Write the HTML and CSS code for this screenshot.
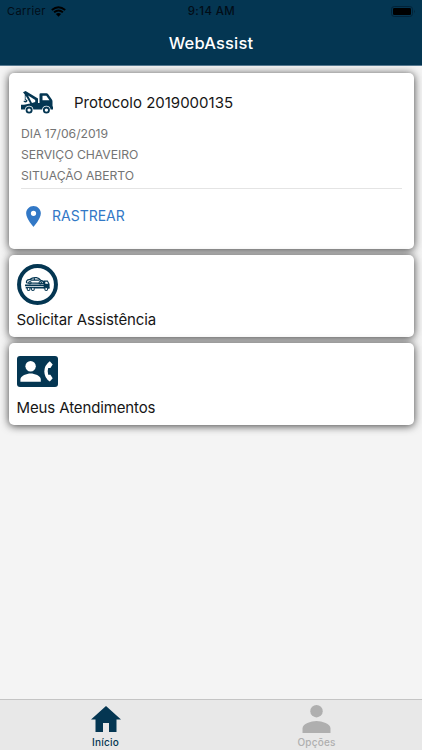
FILE: index.html
```
<!DOCTYPE html>
<html lang="pt-BR">
<head>
<meta charset="utf-8">
<title>WebAssist</title>
<link rel="stylesheet" href="styles.css">
</head>
<body>
<div class="app">
  <header class="header">
    <div class="status">
      <div class="carrier"><span>Carrier</span>
        <svg class="wifi" viewBox="0 0 15 11"><path d="M.8 4Q7.5-1.7 14.2 4M3.1 6.3Q7.5 2.5 11.9 6.3" fill="none" stroke="currentColor" stroke-width="1.9"/><path d="M4.9 8Q7.5 5.9 10.1 8L7.5 10.7Z" fill="currentColor"/></svg>
      </div>
      <div class="clock">9:14 AM</div>
      <svg class="battery" viewBox="0 0 25 11"><rect x=".5" y=".5" width="21" height="10" rx="2.8" fill="none" stroke="#022339"/><rect x="2" y="2" width="18" height="7" rx="1.3"/><path d="M23 3.7q1.6 1.8 0 3.6z" fill="#022339"/></svg>
    </div>
    <h1 class="title">WebAssist</h1>
  </header>
  <main class="content">
    <section class="card protocol">
      <div class="protocol-head">
        <svg class="truck" viewBox="0 0 32 23"><path fill="currentColor" fill-rule="evenodd" d="M2 1.2L4.6 0 17 7.6V12H18.5V3.5Q18.5 2.2 19.8 2.2H25.5Q26.4 2.2 27 3L30.7 8.2Q31.5 9.2 31.5 10.5V15.5H32V18.5H29.6A4.3 4.3 0 0 0 21.1 18.5H12.4A4.3 4.3 0 0 0 3.9 18.5H0V13.8H3L9.2 12.4 4.6 4.4V8.2Q7.2 8.9 6.2 10.6 4.7 12.3 2.5 10.6L3 9.5Q5 10.5 5 9.6L3.8 9V3.5ZM7.1 4.6L11 11.9 14.2 11V9.1ZM21.5 4.8V9.3H28.5L25.3 4.8Z"/><g fill="none" stroke="currentColor" stroke-width="1.8"><circle cx="8.1" cy="19.1" r="2.6"/><circle cx="25.4" cy="19.1" r="2.6"/></g></svg>
        <h2 class="protocol-title">Protocolo 2019000135</h2>
      </div>
      <p class="detail">DIA 17/06/2019</p>
      <p class="detail">SERVIÇO CHAVEIRO</p>
      <p class="detail">SITUAÇÃO ABERTO</p>
      <div class="track">
        <svg class="pin" viewBox="5 2 14 20"><path fill="currentColor" d="M12 2C8.13 2 5 5.13 5 9c0 5.25 7 13 7 13s7-7.75 7-13c0-3.87-3.13-7-7-7zm0 9.5a2.5 2.5 0 1 1 0-5 2.5 2.5 0 0 1 0 5z"/></svg>
        <span class="track-label">RASTREAR</span>
      </div>
    </section>
    <section class="card action">
      <svg class="assist" viewBox="0 0 40 40"><circle cx="20" cy="20" r="18" fill="none" stroke="currentColor" stroke-width="3.9"/><g fill="none" stroke="currentColor"><path stroke-width="1.2" d="M9.3 18.5Q8.7 15.5 12 15.3Q15.5 12.7 19 13.3Q21.5 13.8 23.2 16Q26.5 16.7 26.4 19L9.3 18.5M13 15.7H22M17 13.5V16"/><circle cx="12.6" cy="18.3" r="1.2"/><circle cx="22.7" cy="18.3" r="1.2"/><path stroke-width="1.6" d="M7.8 20.8H26.8M8.5 23.2H31.5"/></g><path fill="currentColor" fill-rule="evenodd" d="M26 16.2H30L31.8 19.5V24H26ZM27.6 17.4V19.2H30.5L29.5 17.4Z"/><g fill="#fff" stroke="currentColor" stroke-width="1"><circle cx="11.3" cy="24.4" r="1.4"/><circle cx="15.5" cy="24.4" r="1.4"/><circle cx="28.5" cy="24.4" r="1.4"/></g></svg>
      <h2 class="action-title">Solicitar Assistência</h2>
    </section>
    <section class="card action">
      <svg class="contact" viewBox="0 0 41 31"><rect width="41" height="31" rx="3" fill="currentColor"/><g fill="#fff"><circle cx="13.6" cy="10.2" r="5.2"/><path d="M3.4 25.8V23.5C3.4 19.8 9.7 17.6 13.6 17.6S23.8 19.8 23.8 23.5V25.8Z"/><path d="M32.8 5.2L35.7 8.6 33.4 12.1H31.2Q30.1 15.4 31.2 18.8H33.4L35.7 22.2 32.8 25.6Q27.3 21.6 27.3 15.4T32.8 5.2Z"/></g></svg>
      <h2 class="action-title">Meus Atendimentos</h2>
    </section>
  </main>
  <nav class="tabs">
    <a class="tab active"><svg class="home" viewBox="0 0 30 26"><path fill="currentColor" d="M15 0L30 13.5H25.5V26H18V17H12V26H4.5V13.5H0Z"/></svg><span>Início</span></a>
    <a class="tab"><svg class="person" viewBox="0 0 28 28"><circle cx="14" cy="6.2" r="6.2" fill="currentColor"/><path fill="currentColor" d="M0 28V23.5C0 18.8 8.5 16 14 16S28 18.8 28 23.5V28Z"/></svg><span>Opções</span></a>
  </nav>
</div>
</body>
</html>
```
FILE: styles.css
```
* { box-sizing: border-box; }
body { margin: 0; font-family: Inter, "Liberation Sans", sans-serif; }
h1, h2, p { margin: 0; }
svg { display: block; flex: none; }
.app { width: 422px; height: 750px; display: flex; flex-direction: column; background: #f4f4f4; overflow: hidden; }
.header { height: 66px; flex: none; background: #043652; border-bottom: 1px solid #587b92; }
.status { height: 22px; display: grid; grid-template-columns: 1fr auto 1fr; padding: 0 6px 0 7px; color: #020d17; align-items: center; }
.carrier { display: flex; align-items: center; gap: 5px; font-size: 11px; letter-spacing: .4px; }
.wifi { width: 15px; height: 11px; color: #000; }
.clock { font-size: 11.5px; font-weight: 500; letter-spacing: .4px; }
.battery { width: 25px; height: 11px; justify-self: end; }
.title { color: #fff; text-align: center; font-size: 16.5px; font-weight: 500; line-height: 43px; letter-spacing: .15px; }
.content { flex: 1; display: flex; flex-direction: column; gap: 6px; padding: 7px 8.5px 0; }
.card { background: #fff; border-radius: 5px; box-shadow: 0 1px 9px rgba(0, 0, 0, .75); flex: none; color: #161616; }
.protocol { height: 176px; padding: 12px 12px 0 12.5px; }
.protocol-head { display: flex; align-items: center; height: 35px; margin-bottom: 3px; gap: 21px; }
.truck { width: 32px; height: 23px; color: #043652; }
.protocol-title { font-size: 15px; font-weight: 400; line-height: 34px; }
.detail { color: #747474; font-size: 12.2px; line-height: 21px; letter-spacing: -.03px; }
.track { display: flex; align-items: center; height: 54px; margin-top: 2px; border-top: 1px solid #e4e4e4; padding: 1px 0 0 5px; gap: 11px; color: #3278c6; }
.pin { width: 15px; height: 21px; }
.track-label { font-size: 14px; line-height: 20px; }
.action { height: 82px; padding: 9px 8px 8px; }
.assist { width: 41px; height: 41px; color: #043652; }
.contact { width: 41px; height: 31px; margin: 4px 0 6px; color: #043652; }
.action-title { font-size: 15px; font-weight: 400; line-height: 30px; letter-spacing: -.12px; }
.tabs { height: 51px; flex: none; display: flex; background: #e8e8e8; border-top: 1px solid #c4c4c4; color: #afafaf; }
.tab { flex: 1; display: flex; flex-direction: column; align-items: center; font-size: 10px; font-weight: 500; line-height: 12px; letter-spacing: .2px; }
.active { color: #043652; }
.home { width: 30px; height: 26px; margin: 6px 0 4px; }
.person { width: 29px; height: 28px; margin: 5px 0 3px; }
```
